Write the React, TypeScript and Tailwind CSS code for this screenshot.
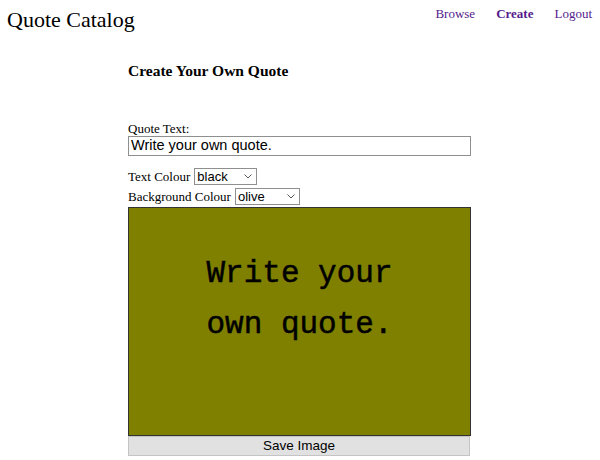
import React from "react";

const sans = { fontFamily: '"Liberation Sans", Arial, sans-serif' };

export default function App() {
  return (
    <div className="w-[600px] h-[460px] bg-white overflow-hidden text-black" style={{ fontFamily: '"Liberation Serif", "Times New Roman", serif' }}>
      <div className="flex justify-between items-start h-[36px]">
        <div className="pl-[7px] pt-[5px] text-[22px] leading-[30px]">Quote Catalog</div>
        <nav className="flex gap-[21px] pr-[8px] pt-[5px] text-[13px] leading-[18px] text-[#551a8b]">
          <a>Browse</a>
          <a className="font-bold">Create</a>
          <a>Logout</a>
        </nav>
      </div>
      <div className="w-[343px] ml-[128px]">
        <h2 className="mt-[26px] text-[15.5px] leading-[18px] font-bold">Create Your Own Quote</h2>
        <div className="mt-[41px] text-[13px] leading-[15px]">Quote Text:</div>
        <div className="h-[20px] border border-[#8f8f8f] flex items-center pl-[2px] text-[14.5px]" style={sans}>
          Write your own quote.
        </div>
        <div className="mt-[12px] flex items-center h-[17px] text-[13px]">
          <span>Text Colour</span>
          <div className="ml-[4px] w-[63px] h-[17px] border border-[#8f8f8f] flex items-center justify-between pl-[2px] pr-[4px] text-[13px]" style={sans}>
            <span>black</span>
            <svg width="8" height="5" viewBox="0 0 8 5"><path d="M0.5 0.5 L4 4 L7.5 0.5" fill="none" stroke="#555" strokeWidth="1" /></svg>
          </div>
        </div>
        <div className="mt-[3px] flex items-center h-[17px] text-[13px]">
          <span>Background Colour</span>
          <div className="ml-[4px] w-[65px] h-[17px] border border-[#8f8f8f] flex items-center justify-between pl-[2px] pr-[4px] text-[13px]" style={sans}>
            <span>olive</span>
            <svg width="8" height="5" viewBox="0 0 8 5"><path d="M0.5 0.5 L4 4 L7.5 0.5" fill="none" stroke="#555" strokeWidth="1" /></svg>
          </div>
        </div>
        <div className="mt-[2px] h-[229px] border border-[#333] bg-[#808000] flex flex-col items-center pt-[40px] text-[31px] leading-[51px] [-webkit-text-stroke:0.5px_black]" style={{ fontFamily: '"Liberation Mono", "DejaVu Sans Mono", monospace' }}>
          <div>Write your</div>
          <div>own quote.</div>
        </div>
        <div className="w-[342px] h-[20px] bg-[#e1e1e1] border border-[#c4c4c4] flex items-center justify-center text-[13.5px]" style={sans}>
          Save Image
        </div>
      </div>
    </div>
  );
}
